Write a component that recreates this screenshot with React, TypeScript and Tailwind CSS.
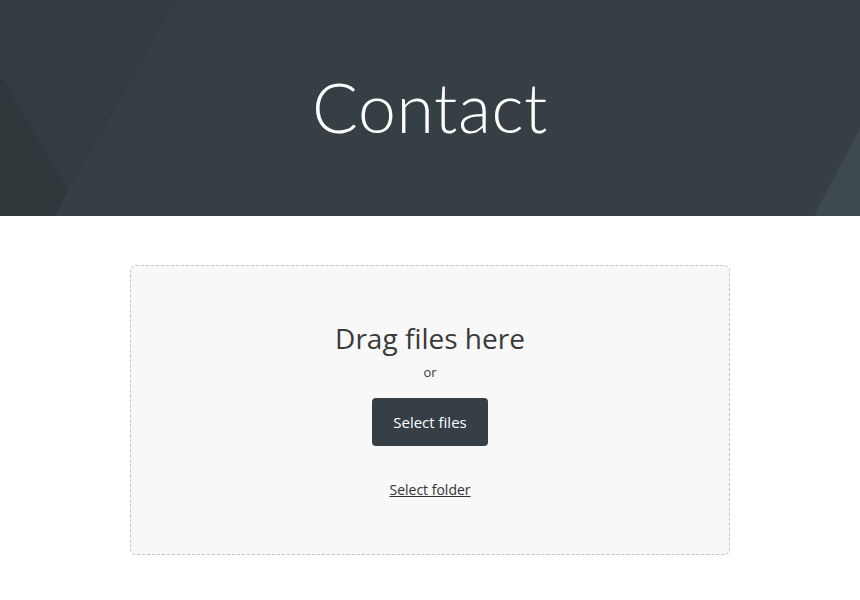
export default function App() {
  return (
    <div className="min-h-[600px] bg-white" style={{ fontFamily: '"Open Sans", sans-serif' }}>
      <header className="relative h-[216px] overflow-hidden bg-[#363f44] flex items-center justify-center">
        <svg className="absolute inset-0" width="860" height="216" viewBox="0 0 860 216" preserveAspectRatio="none">
          <polygon points="0,0 176,0 55,216 0,216" fill="#343c41" />
          <polygon points="0,75 68,190 55,216 0,216" fill="#2f373b" />
          <polygon points="860,128 860,216 814,216" fill="#3e4a50" />
        </svg>
        <h1 className="relative text-white text-[68px] font-light tracking-[0.6px] leading-none -mt-[2px]" style={{ fontFamily: 'Lato, sans-serif' }}>
          Contact
        </h1>
      </header>
      <main className="pt-[49px] flex justify-center">
        <div className="w-[600px] h-[290px] rounded-[6px] border border-dashed border-[#c4c4c4] bg-[#f8f8f8] flex flex-col items-center pt-[53px]">
          <h2 className="text-[28px] leading-[38px] text-[#3a3a3a]">Drag files here</h2>
          <p className="text-[13px] leading-[18px] text-[#3a3a3a] mt-[6px]">or</p>
          <button className="mt-[17px] w-[116px] h-[48px] rounded-[4px] bg-[#353f45] text-white text-[15px]">Select files</button>
          <a href="#" className="mt-[33px] text-[14px] text-[#333] underline">Select folder</a>
        </div>
      </main>
    </div>
  );
}
